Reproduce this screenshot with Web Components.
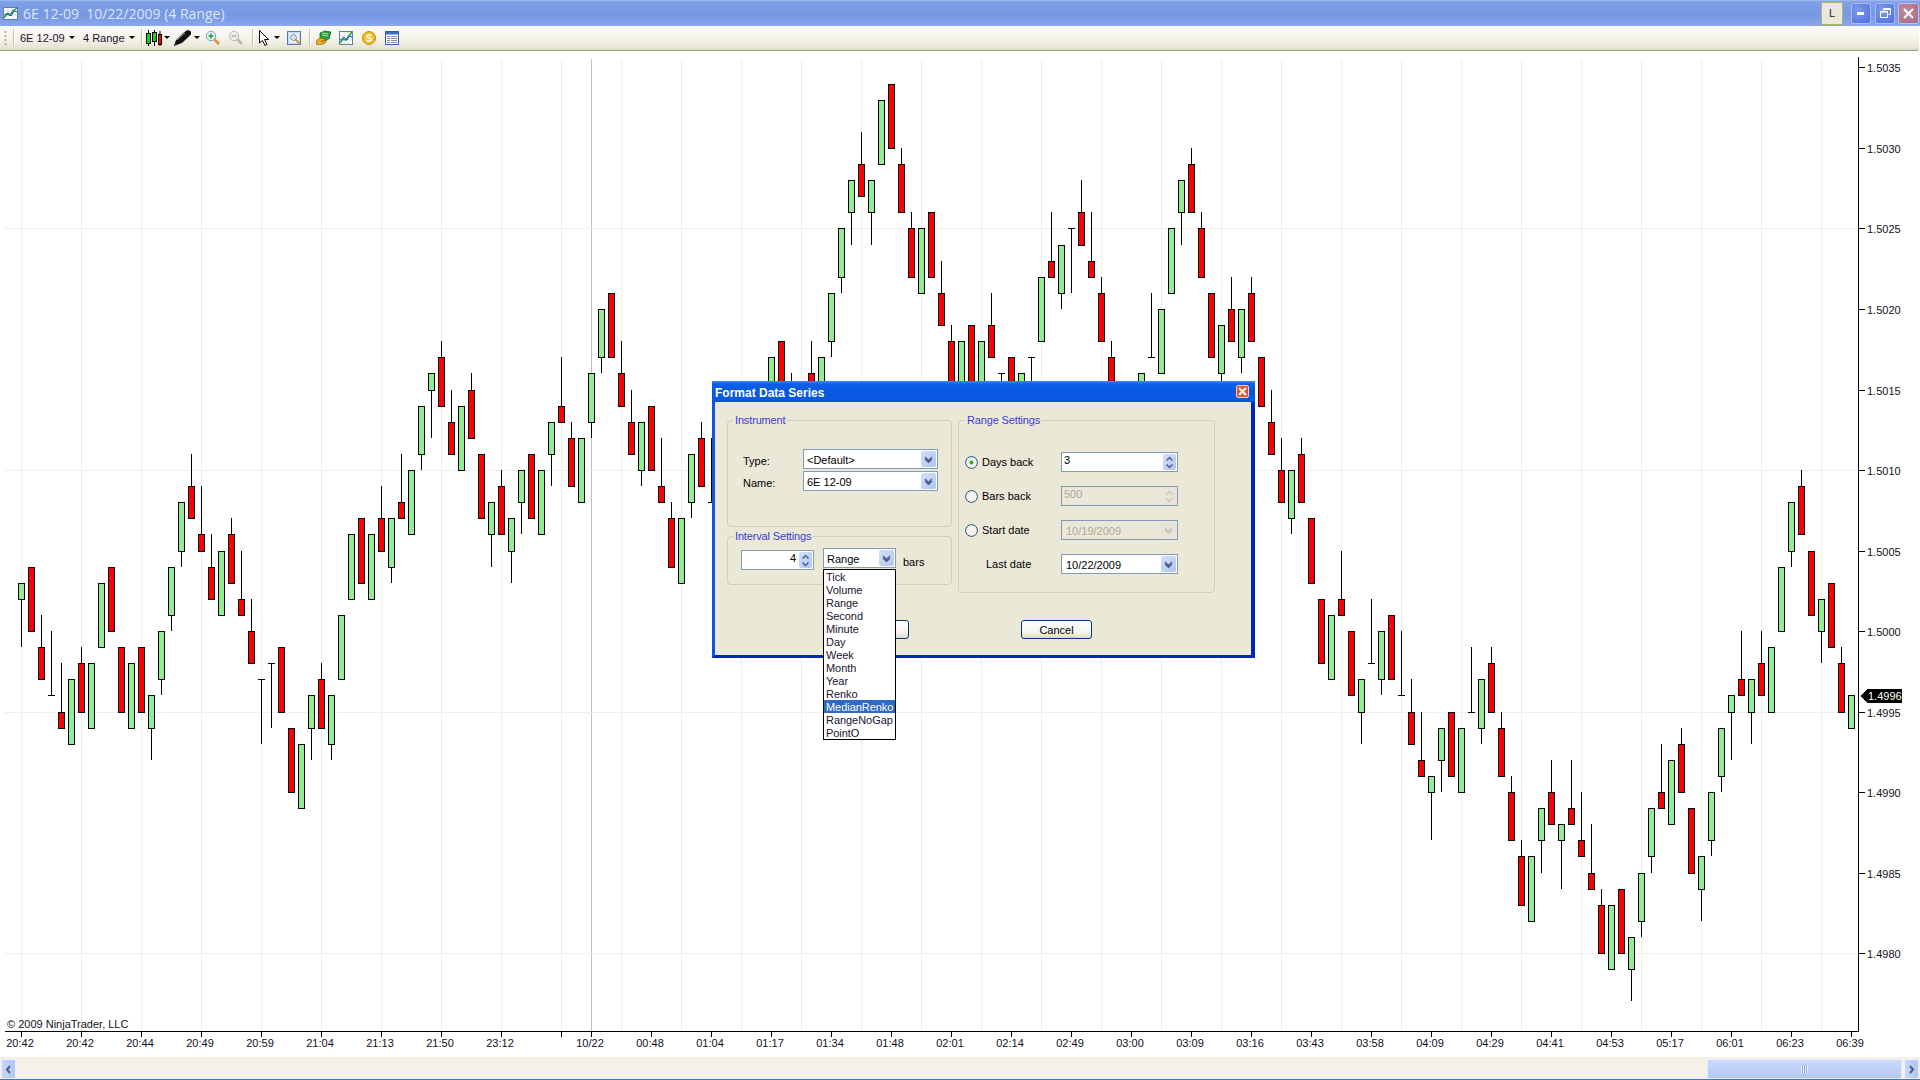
<!DOCTYPE html>
<html>
<head>
<meta charset="utf-8">
<title>6E 12-09</title>
<style>
    html, body { margin: 0; padding: 0; overflow: hidden; background: #fff; }
    body { font: 11px "Liberation Sans", Arial, sans-serif; color: #000; }
</style>
</head>
<body>
<chart-window>
    <title-bar slot="title" caption="6E 12-09&#160;&#160;10/22/2009 (4 Range)">
        <svg slot="icon" width="15" height="13" viewBox="0 0 15 13"><rect x=".5" y=".5" width="14" height="12" fill="#fff" stroke="#5f7fa8"/><path d="M5 1v11M10 1v11M1 4h13M1 8h13" stroke="#d5dde8"/><path d="M1 11l3-4 3 1 3-4 4-3" fill="none" stroke="#1c9c3c" stroke-width="1.5"/><path d="M1 8l4-2 3 3 3-5 3 1" fill="none" stroke="#2458c8"/></svg>
        <win-button slot="controls" kind="label">L</win-button>
        <win-button slot="controls" kind="min"></win-button>
        <win-button slot="controls" kind="max"></win-button>
        <win-button slot="controls" kind="close"></win-button>
    </title-bar>
    <tool-bar slot="tools">
        <tool-sep style="margin-left:6px"></tool-sep>
        <tool-menu style="margin-left:5px;width:55px">6E 12-09</tool-menu>
        <tool-menu style="margin-left:8px;width:52px">4 Range</tool-menu>
        <tool-sep style="margin-left:6px"></tool-sep>
        <tool-icon arrow style="margin-left:3px">
            <svg width="16" height="16" viewBox="0 0 16 16"><path d="M2.5 0v16M8.5 0v16M14 1v15" stroke="#000"/><rect x=".5" y="3.5" width="4" height="10" fill="#00e010" stroke="#000"/><rect x="6.5" y="2.5" width="4" height="9" fill="#20d020" stroke="#000"/><rect x="12.5" y="4.5" width="3" height="10" fill="#ff0000" stroke="#000"/></svg>
        </tool-icon>
        <tool-icon arrow style="margin-left:4px">
            <svg width="18" height="16" viewBox="0 0 18 16"><path d="M0 16l2-6L11 1.500 14 0l3 1.500v3L8 13z" fill="#111"/><path d="M3 10l8-7" stroke="#9a9a9a"/><path d="M0 16l3-1-2-2z" fill="#444"/></svg>
        </tool-icon>
        <tool-icon style="margin-left:5px">
            <svg width="15" height="15" viewBox="0 0 15 15"><path d="M9.500 9.500l4.500 4.500" stroke="#e0902c" stroke-width="2.500"/><circle cx="6" cy="6" r="4.700" fill="#e4f2fb" stroke="#7f9db0"/><path d="M3.500 6h5M6 3.500v5" stroke="#18a030" stroke-width="1.500"/></svg>
        </tool-icon>
        <tool-icon style="margin-left:8px">
            <svg width="15" height="15" viewBox="0 0 15 15"><path d="M9.500 9.500l4.500 4.500" stroke="#b8b8b0" stroke-width="2.500"/><circle cx="6" cy="6" r="4.700" fill="#eeeeea" stroke="#b8b8b0"/><path d="M3.500 6h5" stroke="#b0b0a8" stroke-width="1.500"/></svg>
        </tool-icon>
        <tool-sep style="margin-left:9px"></tool-sep>
        <tool-icon arrow style="margin-left:5px;--arrow-gap:5px">
            <svg width="10" height="16" viewBox="0 0 10 16"><path d="M.5.500v12.500l3-2.500 2.500 5 2-1-2.500-5h4z" fill="#fff" stroke="#000"/></svg>
        </tool-icon>
        <tool-icon style="margin-left:7px">
            <svg width="14" height="14" viewBox="0 0 14 14"><rect x=".5" y=".5" width="13" height="13" fill="#d9e6f8" stroke="#5878b0"/><rect x="2" y="2" width="10" height="10" fill="#fff" stroke="#a9c0e0" stroke-width=".7"/><path d="M8.500 8.500l4 4" stroke="#e09030" stroke-width="2"/><circle cx="6.500" cy="6.500" r="3" fill="#cfe4f8" stroke="#6f8fa8"/></svg>
        </tool-icon>
        <tool-sep style="margin-left:8px"></tool-sep>
        <tool-icon style="margin-left:5px">
            <svg width="15" height="15" viewBox="0 0 15 15"><path d="M4 3l5-2 6 1-2 7-6 1-3-2z" fill="#2da040" stroke="#0f5a20" stroke-width=".7"/><path d="M6 3l6 1M6 5l6 1" stroke="#a8e0a0"/><path d="M0 14l1-4 3-2 5 1-1 2-3 0 3 0 3-1-2 3-5 2z" fill="#e8b028" stroke="#8a6410" stroke-width=".7"/></svg>
        </tool-icon>
        <tool-icon style="margin-left:8px">
            <svg width="14" height="14" viewBox="0 0 14 14"><rect x=".5" y=".5" width="13" height="13" fill="#fff" stroke="#5f7fa8"/><path d="M5 1v12M9 1v12M1 5h12M1 9h12" stroke="#d5dde8"/><path d="M1 12l3-4 3 1 3-4 3-4" fill="none" stroke="#1c9c3c" stroke-width="1.500"/><path d="M1 9l4-3 3 3 2-4 3 1" fill="none" stroke="#2458c8"/></svg>
        </tool-icon>
        <tool-icon style="margin-left:9px">
            <svg width="14" height="14" viewBox="0 0 14 14"><circle cx="7" cy="7" r="6.500" fill="#f0b820" stroke="#c88a10"/><circle cx="7" cy="7" r="4.700" fill="#f8c830"/><path d="M9.300 4.800C8.500 3.800 4.800 3.700 4.800 5.500 4.800 7.400 9.300 6.600 9.300 8.500 9.300 10.300 5.500 10.200 4.700 9.200" fill="none" stroke="#fff" stroke-width="1.500"/></svg>
        </tool-icon>
        <tool-icon style="margin-left:9px">
            <svg width="14" height="14" viewBox="0 0 14 14"><rect x=".5" y=".5" width="13" height="13" fill="#fff" stroke="#3c5c9c"/><rect x="1" y="1" width="12" height="2.500" fill="#3a6cc8"/><path d="M2 5.500h3M6 5.500h6M2 7.500h3M6 7.500h6M2 9.500h3M6 9.500h6M2 11.500h3M6 11.500h6" stroke="#7f8fa8"/></svg>
        </tool-icon>
    </tool-bar>
    <price-chart slot="chart"></price-chart>
    <h-scroll slot="scroll"></h-scroll>
    <format-dialog slot="dialog" caption="Format Data Series">
        <group-box slot="instrument" caption="Instrument">
            <div style="display:grid;grid-template-columns:60px 135px;row-gap:2px;align-items:center;padding:22px 0 0 15px">
                <span style="padding-top:3px">Type:</span><combo-box value="&lt;Default&gt;"></combo-box>
                <span style="padding-top:3px">Name:</span><combo-box value="6E 12-09"></combo-box>
            </div>
        </group-box>
        <group-box slot="interval" caption="Interval Settings">
            <div style="display:flex;align-items:flex-start;padding:5px 0 0 13px">
                <spin-box value="4" align="right" style="width:73px;margin-top:2px"></spin-box>
                <combo-box value="Range" style="width:73px;margin-left:9px">
                    <drop-list selected="MedianRenko" items="Tick,Volume,Range,Second,Minute,Day,Week,Month,Year,Renko,MedianRenko,RangeNoGap,PointO"></drop-list>
                </combo-box>
                <span style="margin:8px 0 0 7px">bars</span>
            </div>
        </group-box>
        <group-box slot="range" caption="Range Settings" style="--legend-left:6px">
            <div style="display:grid;grid-template-columns:96px 117px;grid-auto-rows:20px;row-gap:14px;align-items:center;padding:25px 0 0 6px">
                <radio-item checked>Days back</radio-item><spin-box value="3"></spin-box>
                <radio-item>Bars back</radio-item><spin-box value="500" disabled></spin-box>
                <radio-item>Start date</radio-item><combo-box value="10/19/2009" disabled date></combo-box>
                <span style="padding-left:21px">Last date</span><combo-box value="10/22/2009" date></combo-box>
            </div>
        </group-box>
        <xp-button slot="ok" aria-label="OK"></xp-button>
        <xp-button slot="cancel">Cancel</xp-button>
    </format-dialog>
</chart-window>

<script>
class ShadowElement extends HTMLElement {
    constructor() {
        super();
        this.attachShadow({ mode: 'open' });
    }

    connectedCallback() {
        this.render();
    }
}

const CHEVRON = (color) => `<svg width="9" height="7" viewBox="0 0 9 7"><path d="M1 1l3.500 3.500L8 1M1 3l3.500 3.500L8 3" fill="none" stroke="${color}" stroke-width="1.300"/></svg>`;

class ChartWindow extends ShadowElement {
    render() {
        this.shadowRoot.innerHTML = `
            <style>
                :host { display: flex; flex-direction: column; width: 1920px; height: 1080px; position: relative; overflow: hidden; background: #fff; }
                ::slotted([slot="dialog"]) { position: absolute; left: 712px; top: 381px; }
            </style>
            <slot name="title"></slot>
            <slot name="tools"></slot>
            <slot name="chart"></slot>
            <slot name="scroll"></slot>
            <slot name="dialog"></slot>
        `;
    }
}

class TitleBar extends ShadowElement {
    render() {
        this.shadowRoot.innerHTML = `
            <style>
                :host { display: flex; align-items: center; height: 26px; box-sizing: border-box; padding: 0 1px 0 3px; flex: none;
                    background: linear-gradient(#a4bdf0 0, #7e9fe8 2px, #7898e4 14px, #7d9de6 20px, #8ca9ec 26px);
                    background-color: #7b9be5; }
                span { margin-left: 5px; color: #dce6fa; font: 14px "Open Sans", "Noto Sans", sans-serif; white-space: pre; flex: 1; }
                div { display: flex; align-items: center; }
                ::slotted(svg) { display: block; margin-top: 1px; }
            </style>
            <slot name="icon"></slot>
            <span>${this.getAttribute('caption')}</span>
            <div><slot name="controls"></slot></div>
        `;
    }
}

class WinButton extends ShadowElement {
    render() {
        const kind = this.getAttribute('kind');
        const glyphs = {
            min: '<svg width="10" height="5" viewBox="0 0 10 5"><rect x="1" y="1" width="7" height="3" fill="#fff"/></svg>',
            max: '<svg width="11" height="11" viewBox="0 0 11 11"><path d="M3.500 2.500v-2h7v6h-2M.5 3.500h7v6h-7z" fill="none" stroke="#fff"/><path d="M3 1.500h7M0 4h8" stroke="#fff"/></svg>',
            close: '<svg width="11" height="11" viewBox="0 0 11 11"><path d="M1 1l9 9M10 1l-9 9" stroke="#fff" stroke-width="2.200"/></svg>'
        };
        const bg = {
            label: 'background:#ebe8d8;border:1px solid #b5ad7e;width:20px;height:21px;margin-right:8px;border-radius:1px;',
            min: 'background:radial-gradient(circle at 35% 35%,#7d9cec,#4d6be0);border:1px solid #a9bdf2;width:18px;height:19px;',
            max: 'background:radial-gradient(circle at 35% 35%,#7d9cec,#4d6be0);border:1px solid #a9bdf2;width:18px;height:19px;margin-left:4px;',
            close: 'background:radial-gradient(circle at 35% 35%,#c08a9c,#a9677f);border:1px solid #b7c6ee;width:19px;height:19px;margin-left:3px;'
        };
        this.shadowRoot.innerHTML = `
            <style>
                :host { display: flex; align-items: center; justify-content: center; box-sizing: content-box; border-radius: 3px; ${bg[kind]} font-size: 11px; color: #222; }
                svg { display: block; }
            </style>
            <slot></slot>${glyphs[kind] || ''}
        `;
    }
}

class ToolBar extends ShadowElement {
    render() {
        this.shadowRoot.innerHTML = `
            <style>
                :host { display: flex; align-items: center; height: 25px; flex: none; box-sizing: border-box; padding: 0 0 1px 4px; margin-right: 1px;
                    background: linear-gradient(#fbfaf6 0, #f7f6ef 40%, #eceadb 80%, #dedccb 100%);
                    border-bottom: 1px solid #98987a; border-bottom-right-radius: 3px; }
                i { display: block; width: 3px; height: 16px; background: radial-gradient(circle, #b0ad9a 0 1px, transparent 1.200px) 0 0 / 3px 4px; }
            </style>
            <i></i>
            <slot></slot>
        `;
    }
}

class ToolSep extends ShadowElement {
    render() {
        this.shadowRoot.innerHTML = `
            <style>:host { display: block; width: 1px; height: 17px; background: #c5c2ae; border-right: 1px solid #fff; flex: none; }</style>
        `;
    }
}

class ToolMenu extends ShadowElement {
    render() {
        this.shadowRoot.innerHTML = `
            <style>
                :host { display: flex; justify-content: space-between; align-items: center; flex: none; color: #1c1230; font-size: 11px; }
                b { width: 0; height: 0; border: 3px solid transparent; border-top: 3px solid #000; border-bottom: 0; margin-right: 0; }
            </style>
            <slot></slot><b></b>
        `;
    }
}

class ToolIcon extends ShadowElement {
    render() {
        this.shadowRoot.innerHTML = `
            <style>
                :host { display: flex; align-items: center; flex: none; }
                ::slotted(svg) { display: block; }
                b { width: 0; height: 0; border: 3px solid transparent; border-top: 3px solid #000; border-bottom: 0; margin-left: var(--arrow-gap, 2px); }
            </style>
            <slot></slot>${this.hasAttribute('arrow') ? '<b></b>' : ''}
        `;
    }
}

// candle list in price ticks above 1.4980: [kind, body top, body bottom, high, low]
// bars behind the dialog get a made up bottom (30), nobody can see it
const BARS = [
    ['g',23,22,23,19],['r',24,20],['r',19,17,21,17],['d',16,16,20,16],['r',15,14,18,14],['g',17,13],['r',18,15,19,15],['g',18,14],
    ['g',23,19],['r',24,20],['r',19,15],['g',18,14],['r',19,15],['g',16,14,16,12],['g',20,17,20,16],['g',24,21,24,20],
    ['g',28,25,28,24],['r',29,27,31,27],['r',26,25,29,25],['r',24,22,26,22],['g',25,21],['r',26,23,27,23],['r',22,21,25,21],['r',20,18,22,18],
    ['d',17,17,17,13],['d',18,18,18,14],['r',19,15],['r',14,10],['g',13,9],['g',16,14,16,12],['r',17,14,18,14],['g',16,13,16,12],
    ['g',21,17],['g',26,22],['r',27,23],['g',26,22],['r',27,25,29,25],['g',27,24,27,23],['r',28,27,31,27],['g',30,26],
    ['g',34,31,34,30],['g',36,35,36,32],['r',37,34,38,34],['r',33,31,35,31],['g',34,30],['r',35,32,36,32],['r',31,27],['g',28,26,28,24],
    ['r',29,26,30,26],['g',27,25,27,23],['g',30,28,30,26],['r',31,27],['g',30,26],['g',33,31,33,29],['r',34,33,37,33],['r',32,29,33,29],
    ['g',32,28],['g',36,33,36,32],['g',40,37,40,36],['r',41,37],['r',36,34,38,34],['r',33,31,35,31],['g',33,30,33,29],['r',34,30],
    ['r',29,28,32,28],['r',27,24,28,24],['g',27,23],['g',31,28,31,27],['r',32,29,33,29],['d',28,28,32,28],
    null,null,null,null,null,
    ['g',37,30],['r',38,30],['r',33,30,36,30],null,['r',36,30,38,30],['g',37,30],['g',41,38,41,37],['g',45,42,45,41],
    ['g',48,46,48,44],['r',49,47,51,47],['g',48,46,48,44],['g',53,49],['r',54,50],['r',49,46,50,46],['r',45,42,46,42],['g',45,41],
    ['r',46,42],['r',41,39,43,39],['r',38,30,39,30],['g',38,30],['r',39,30],['g',38,30],['r',39,37,41,37],['d',36,36,36,30],
    ['r',37,30],['g',36,30],['d',37,37,37,30],['g',42,38],['r',43,42,46,42],['g',44,41,44,40],['d',45,45,45,41],['r',46,44,48,44],
    ['r',43,42,46,42],['r',41,38,42,38],['r',37,30,38,30],null,null,['g',36,30],['d',37,37,41,37],['g',40,36],
    ['g',45,41],['g',48,46,48,44],['r',49,46,50,46],['r',45,42,46,42],['r',41,37],['g',39,36,39,30],['r',40,38,42,38],['g',40,37,40,36],
    ['r',41,38,42,38],['r',37,34],['r',33,31,35,31],['r',30,28,32,28],['g',30,27,30,26],['r',31,28,32,28],['r',27,23],['r',22,18],
    ['g',21,17],['r',22,21,25,21],['r',20,16],['g',17,15,17,13],['d',18,18,22,18],['g',20,17,20,16],['r',21,17],['d',16,16,20,16],
    ['r',15,13,17,13],['r',12,11,15,11],['g',11,10,11,7],['g',14,12,14,10],['r',15,11],['g',14,10],['d',15,15,19,15],['g',17,14,17,13],
    ['r',18,15,19,15],['r',14,11,15,11],['r',10,7,11,7],['r',6,3,7,3],['g',6,2],['g',9,7,9,5],['r',10,8,12,8],['g',8,7,8,4],
    ['r',9,8,12,8],['r',7,6,10,6],['r',5,4,8,4],['r',3,0,4,0],['g',3,-1],['r',4,0],['g',1,-1,1,-3],['g',5,2,5,1],
    ['g',9,6,9,5],['r',10,9,13,9],['g',12,8],['r',13,10,14,10],['r',9,5],['g',6,4,6,2],['g',10,7,10,6],['g',14,11,14,10],
    ['g',16,15,16,12],['r',17,16,20,16],['g',17,15,17,13],['r',18,16,20,16],['g',19,15],['g',24,20],['g',28,25,28,24],['r',29,26,30,26],
    ['r',25,21],['g',22,20,22,18],['r',23,19],['r',18,15,19,15],['g',16,14]
];

const TIME_LABELS = ['20:42','20:42','20:44','20:49','20:59','21:04','21:13','21:50','23:12',null,'00:48','01:04','01:17','01:34','01:48','02:01','02:14','02:49','03:00','03:09','03:16','03:43','03:58','04:09','04:29','04:41','04:53','05:17','06:01','06:23','06:39'];

class PriceChart extends ShadowElement {
    yOf(tick) {
        return Math.round(952 - 16.1 * tick);
    }

    render() {
        let grid = '', axis = '', candles = '';
        const right = 1858, bottom = 1030, top = 58;

        for (let x = 21; x <= 1851; x += 60) {
            grid += `<path d="M${x + .5} ${top}V${bottom}" stroke="#f0efe6"/>`;
        }
        grid += `<path d="M591.500 ${top}V${bottom}" stroke="#c0c0c0"/>`;
        for (const t of [45, 30, 15, 0]) {
            const y = this.yOf(t) + .5;
            grid += `<path d="M5 ${y}H${right}" stroke="#f0efe6"/>`;
        }

        BARS.forEach((bar, i) => {
            if (!bar) return;
            const [kind, bodyTop, bodyBottom, high = bodyTop, low = bodyBottom] = bar;
            const x = 21 + 10 * i;
            const yTop = this.yOf(bodyTop), yBottom = this.yOf(bodyBottom);
            candles += `<path d="M${x + .5} ${this.yOf(high)}V${this.yOf(low)}" stroke="#000"/>`;
            if (kind === 'd') {
                candles += `<path d="M${x - 3} ${yTop + .5}H${x + 4}" stroke="#000"/>`;
            } else {
                const fill = kind === 'g' ? '#90ee90' : '#ff0000';
                candles += `<rect x="${x - 2.5}" y="${yTop + .5}" width="6" height="${yBottom - yTop}" fill="${fill}" stroke="#000"/>`;
            }
        });

        axis += `<path d="M${right + .5} 56V${bottom + 1}M5 ${bottom + .5}H${right + 1}" stroke="#000"/>`;
        for (let t = 55; t >= 0; t -= 5) {
            const y = this.yOf(t);
            const price = (1.4980 + t / 10000).toFixed(4);
            axis += `<path d="M${right} ${y + .5}H${right + 7}" stroke="#000"/>`;
            axis += `<text x="${right + 9}" y="${y + 5}">${price}</text>`;
        }
        TIME_LABELS.forEach((label, n) => {
            const x = n < 10 ? 21 + 60 * n : 651 + 60 * (n - 10);
            axis += `<path d="M${x + .5} ${bottom}V${bottom + 6}" stroke="#000"/>`;
            if (label) axis += `<text x="${x - 1}" y="1046" text-anchor="middle">${label}</text>`;
        });
        axis += `<path d="M561.500 ${bottom}v6M591.500 ${bottom}v6" stroke="#000"/>`;
        axis += `<text x="590" y="1046" text-anchor="middle">10/22</text>`;
        axis += `<text x="7" y="1027">© 2009 NinjaTrader, LLC</text>`;
        axis += `<path d="M1860 695l7-7h35v14h-35z" fill="#000"/>`;
        axis += `<text x="1868" y="699" fill="#fff">1.4996</text>`;

        this.shadowRoot.innerHTML = `
            <style>
                :host { display: block; height: 1006px; flex: none; background: #fff; }
                svg { display: block; }
                path, rect { shape-rendering: crispEdges; }
                text { font: 11px "Liberation Sans", Arial, sans-serif; fill: #10101c; }
                text[fill="#fff"] { fill: #fff; }
            </style>
            <svg width="1920" height="1006" viewBox="0 50 1920 1006">${grid}${candles}${axis}</svg>
        `;
    }
}

class HScroll extends ShadowElement {
    render() {
        const arrow = (d) => `<svg width="7" height="9" viewBox="0 0 7 9"><path d="${d}" fill="none" stroke="#4d6185" stroke-width="2"/></svg>`;
        this.shadowRoot.innerHTML = `
            <style>
                :host { display: flex; height: 24px; box-sizing: border-box; padding: 2px 1px 0 1px; flex: none; background: #f3f1e8; border-bottom: 2px solid #3a78d8; border-top: 0; }
                .btn { width: 13px; border: 1px solid #eaf0fc; border-radius: 2px; background: linear-gradient(90deg, #c6d7fb, #b2c6f6); display: flex; align-items: center; justify-content: center; }
                .thumb { width: 193px; margin: 0 2px 0 auto; border: 1px solid #e4ecfc; border-radius: 2px; background: linear-gradient(#cadbfc, #bccef8 60%, #b4c8f6); display: flex; align-items: center; justify-content: center; }
                .thumb i { width: 7px; height: 8px; background: repeating-linear-gradient(90deg, #eef3fe 0 1px, #8ea6dc 1px 2px); }
            </style>
            <div class="btn">${arrow('M5 1L2 4.500 5 8')}</div>
            <div class="thumb"><i></i></div>
            <div class="btn">${arrow('M2 1l3 3.500L2 8')}</div>
        `;
    }
}

class FormatDialog extends ShadowElement {
    render() {
        this.shadowRoot.innerHTML = `
            <style>
                :host { display: block; width: 543px; height: 277px; box-sizing: border-box; background: #ebe8d8; border-style: solid; border-width: 0 4px 3px 3px;
                    border-color: #0b57e6 #0029b8 #0029b8 #0b57e6; }
                .cap { display: flex; align-items: center; justify-content: space-between; height: 21px; margin: 0 -4px 0 -3px; padding: 0 6px 0 3px;
                    background: linear-gradient(#3f8df0 0, #0a5fe6 3px, #0757e0 12px, #0a5ae6 18px, #0a4fd0 21px);
                    color: #fff; font: bold 12px "Liberation Sans", Arial, sans-serif; }
                .cap span { padding-top: 2px; }
                .x { width: 11px; height: 11px; border: 1px solid #f0d0c0; border-radius: 2px; background: #e0562f; display: flex; align-items: center; justify-content: center; }
                .x svg { display: block; }
                .cols { display: flex; gap: 6px; padding: 12px 0 0 12px; height: 179px; }
                .left { display: flex; flex-direction: column; gap: 3px; width: 225px; }
                .left ::slotted([slot="instrument"]) { height: 113px; }
                .left ::slotted([slot="interval"]) { height: 55px; }
                .right { width: 257px; }
                .buttons { display: flex; gap: 112px; padding: 27px 0 0 123px; }
            </style>
            <div class="cap"><span>${this.getAttribute('caption')}</span>
                <div class="x"><svg width="9" height="9" viewBox="0 0 9 9"><path d="M1 1l7 7M8 1L1 8" stroke="#fff" stroke-width="2"/></svg></div>
            </div>
            <div class="cols">
                <div class="left"><slot name="instrument"></slot><slot name="interval"></slot></div>
                <div class="right"><slot name="range"></slot></div>
            </div>
            <div class="buttons"><slot name="ok"></slot><slot name="cancel"></slot></div>
        `;
    }
}

class GroupBox extends ShadowElement {
    render() {
        this.shadowRoot.innerHTML = `
            <style>
                :host { display: block; height: 179px; }
                fieldset { margin: 0; padding: 0; height: 100%; box-sizing: border-box; min-width: 0; border: 1px solid #d0d0bf; border-radius: 4px; }
                legend { margin-left: var(--legend-left, 5px); padding: 0 2px; font: 11px/13px "Liberation Sans", Arial, sans-serif; letter-spacing: -.15px; color: #3c3cd8; }
            </style>
            <fieldset><legend>${this.getAttribute('caption')}</legend><slot></slot></fieldset>
        `;
    }
}

class ComboBox extends ShadowElement {
    render() {
        const off = this.hasAttribute('disabled');
        const date = this.hasAttribute('date');
        this.shadowRoot.innerHTML = `
            <style>
                :host { display: block; position: relative; height: 20px; }
                .box { display: flex; align-items: center; justify-content: space-between; box-sizing: border-box; height: 20px; border: 1px solid #7f9db9; padding: 1px 1px 1px ${date ? 4 : 3}px;
                    background: ${off ? '#ebe8d8' : '#fff'}; color: ${off ? '#aca899' : '#000'}; }
                span { padding-top: 2px; }
                .btn { width: 15px; height: 16px; border-radius: 2px; display: flex; align-items: center; justify-content: center;
                    background: ${off ? '#e6e4d8' : 'linear-gradient(135deg, #d3e0fb, #b0c4f4)'}; }
                svg { display: block; }
                ::slotted(drop-list) { position: absolute; left: 0; top: 21px; right: 0; }
            </style>
            <div class="box"><span>${this.getAttribute('value').replace('<', '&lt;')}</span>
                <div class="btn">${CHEVRON(off ? '#c8c6ba' : '#4d6185')}</div>
            </div>
            <slot></slot>
        `;
    }
}

class DropList extends ShadowElement {
    render() {
        const sel = this.getAttribute('selected');
        const rows = this.getAttribute('items').split(',').map((item) =>
            `<div class="${item === sel ? 'on' : ''}">${item}</div>`).join('');
        this.shadowRoot.innerHTML = `
            <style>
                :host { display: block; background: #fff; border: 1px solid #000; z-index: 2; }
                div { height: 13px; line-height: 15px; padding-left: 2px; color: #1c1230; letter-spacing: -.05px; }
                .on { background: #316ac5; color: #fff; }
            </style>
            ${rows}
        `;
    }
}

class SpinBox extends ShadowElement {
    render() {
        const off = this.hasAttribute('disabled');
        const right = this.getAttribute('align') === 'right';
        const half = (d) => `<div><svg width="7" height="5" viewBox="0 0 7 5"><path d="${d}" fill="none" stroke="${off ? '#c8c6ba' : '#4d6185'}" stroke-width="1.500"/></svg></div>`;
        this.shadowRoot.innerHTML = `
            <style>
                :host { display: block; height: 20px; }
                .box { display: flex; justify-content: space-between; box-sizing: border-box; height: 20px; border: 1px solid #7f9db9; padding: 1px; background: ${off ? '#ebe8d8' : '#fff'}; color: ${off ? '#aca899' : '#000'}; }
                span { flex: 1; padding: 0 0 0 1px; line-height: 13px; ${right ? 'text-align: right; padding-right: 3px;' : ''} }
                .spin { width: 13px; display: flex; flex-direction: column; gap: 0; border-radius: 2px; background: ${off ? '#e6e4d8' : 'linear-gradient(135deg, #d3e0fb, #b0c4f4)'}; }
                .spin div { flex: 1; display: flex; align-items: center; justify-content: center; }
                svg { display: block; }
            </style>
            <div class="box"><span>${this.getAttribute('value')}</span>
                <div class="spin">${half('M.5 4.500l3-3 3 3')}${half('M.5.500l3 3 3-3')}</div>
            </div>
        `;
    }
}

class RadioItem extends ShadowElement {
    render() {
        const dot = this.hasAttribute('checked') ? '<circle cx="6.500" cy="6.500" r="2" fill="#30b030"/>' : '';
        this.shadowRoot.innerHTML = `
            <style>
                :host { display: flex; align-items: center; gap: 4px; }
                svg { display: block; flex: none; }
            </style>
            <svg width="13" height="13" viewBox="0 0 13 13"><circle cx="6.500" cy="6.500" r="5.900" fill="#f4f3ec" stroke="#1c5180"/>${dot}</svg>
            <slot></slot>
        `;
    }
}

class XpButton extends ShadowElement {
    render() {
        this.shadowRoot.innerHTML = `
            <style>
                :host { display: flex; align-items: center; justify-content: center; width: 71px; height: 19px; box-sizing: border-box; border: 1px solid #003c74; border-radius: 3px; background: linear-gradient(#fff, #f4f3ee 70%, #dcd8c8); color: #000; }
            </style>
            <slot></slot>
        `;
    }
}

customElements.define('chart-window', ChartWindow);
customElements.define('title-bar', TitleBar);
customElements.define('win-button', WinButton);
customElements.define('tool-bar', ToolBar);
customElements.define('tool-sep', ToolSep);
customElements.define('tool-menu', ToolMenu);
customElements.define('tool-icon', ToolIcon);
customElements.define('price-chart', PriceChart);
customElements.define('h-scroll', HScroll);
customElements.define('format-dialog', FormatDialog);
customElements.define('group-box', GroupBox);
customElements.define('combo-box', ComboBox);
customElements.define('drop-list', DropList);
customElements.define('spin-box', SpinBox);
customElements.define('radio-item', RadioItem);
customElements.define('xp-button', XpButton);
</script>
</body>
</html>
